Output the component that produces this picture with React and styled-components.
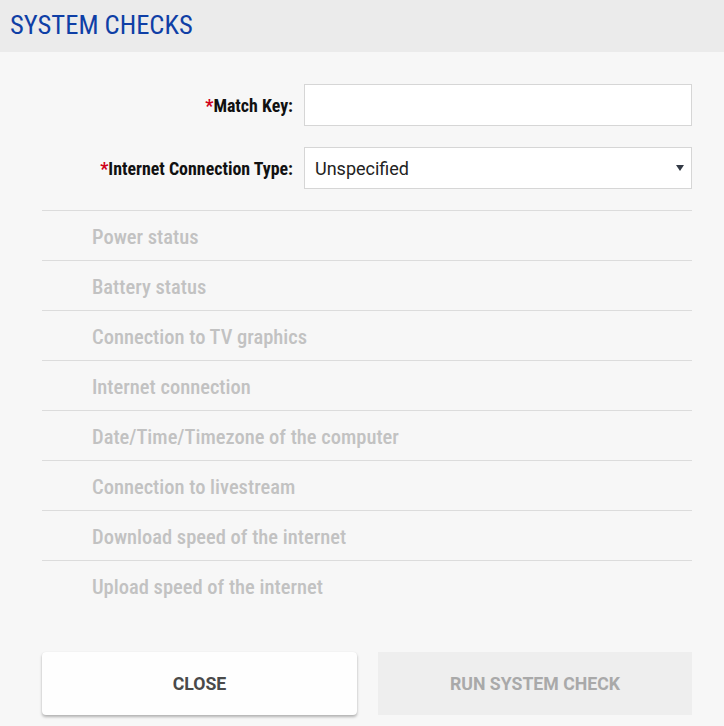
import React from "react";
import styled, { createGlobalStyle } from "styled-components";

const Global = createGlobalStyle`
  html, body { margin: 0; padding: 0; background: #f7f7f7; }
  body { font-family: "Roboto Condensed", Roboto, "Liberation Sans", sans-serif; }
  * { box-sizing: border-box; }
`;

const Page = styled.div`
  width: 724px;
  min-height: 726px;
  background: #f7f7f7;
  display: flex;
  flex-direction: column;
`;

const Header = styled.header`
  height: 52px;
  background: #ebebeb;
  display: flex;
  align-items: center;
  padding: 0 10px 3px;
`;

const Title = styled.h1`
  margin: 0;
  font-family: "Roboto Condensed", Roboto, sans-serif;
  font-stretch: condensed;
  font-weight: 400;
  font-size: 26.6px;
  color: #0f3fa6;
  letter-spacing: 0;
`;

const Body = styled.main`
  padding: 32px 32px 0 42px;
  display: flex;
  flex-direction: column;
`;

const Form = styled.div`
  display: flex;
  flex-direction: column;
  gap: 21px;
  margin-bottom: 21px;
`;

const Row = styled.div`
  display: grid;
  grid-template-columns: 251px 1fr;
  column-gap: 11px;
  align-items: center;
`;

const Label = styled.label`
  text-align: right;
  font-family: "Roboto Condensed", Roboto, sans-serif;
  font-stretch: condensed;
  font-weight: 700;
  font-size: 17.9px;
  color: #111;
`;

const Req = styled.span`
  color: #d0021b;
`;

const Field = styled.div`
  position: relative;
  height: 42px;
  background: #fff;
  border: 1px solid #d6d6d6;
  display: flex;
  align-items: center;
  padding: 0 10px;
  font-family: Roboto, sans-serif;
  font-size: 18px;
  color: #222;
`;

const Arrow = styled.span`
  position: absolute;
  right: 7px;
  top: 50%;
  margin-top: -3px;
  width: 0;
  height: 0;
  border-left: 4px solid transparent;
  border-right: 4px solid transparent;
  border-top: 6px solid #333a45;
`;

const List = styled.ul`
  list-style: none;
  margin: 0;
  padding: 0;
  border-top: 1px solid #dcdcdc;
`;

const Item = styled.li`
  height: 50px;
  display: flex;
  align-items: center;
  padding: 2px 0 0 50px;
  border-bottom: 1px solid ${(p) => (p.$last ? "transparent" : "#dcdcdc")};
  font-family: "Roboto Condensed", Roboto, sans-serif;
  font-stretch: condensed;
  font-weight: 500;
  font-size: 20.5px;
  color: #c2c2c2;
`;

const Buttons = styled.div`
  display: grid;
  grid-template-columns: 315px 314px;
  column-gap: 21px;
  margin-top: 41px;
`;

const Button = styled.button`
  height: 63px;
  border: none;
  border-radius: ${(p) => (p.$disabled ? "0" : "4px")};
  background: ${(p) => (p.$disabled ? "#eeeeee" : "#fefefe")};
  box-shadow: ${(p) =>
    p.$disabled ? "none" : "0 2px 3px rgba(0,0,0,0.28), 0 0 1px rgba(0,0,0,0.08)"};
  font-family: Roboto, sans-serif;
  font-weight: 700;
  font-size: 17.7px;
  color: ${(p) => (p.$disabled ? "#a9a9a9" : "#4a4a4a")};
  cursor: ${(p) => (p.$disabled ? "default" : "pointer")};
`;

const checks = [
  "Power status",
  "Battery status",
  "Connection to TV graphics",
  "Internet connection",
  "Date/Time/Timezone of the computer",
  "Connection to livestream",
  "Download speed of the internet",
  "Upload speed of the internet",
];

export default function App() {
  return (
    <Page>
      <Global />
      <Header>
        <Title>SYSTEM CHECKS</Title>
      </Header>
      <Body>
        <Form>
          <Row>
            <Label>
              <Req>*</Req>Match Key:
            </Label>
            <Field />
          </Row>
          <Row>
            <Label>
              <Req>*</Req>Internet Connection Type:
            </Label>
            <Field>
              Unspecified
              <Arrow />
            </Field>
          </Row>
        </Form>
        <List>
          {checks.map((c, i) => (
            <Item key={c} $last={i === checks.length - 1}>
              {c}
            </Item>
          ))}
        </List>
        <Buttons>
          <Button>CLOSE</Button>
          <Button $disabled>RUN SYSTEM CHECK</Button>
        </Buttons>
      </Body>
    </Page>
  );
}
